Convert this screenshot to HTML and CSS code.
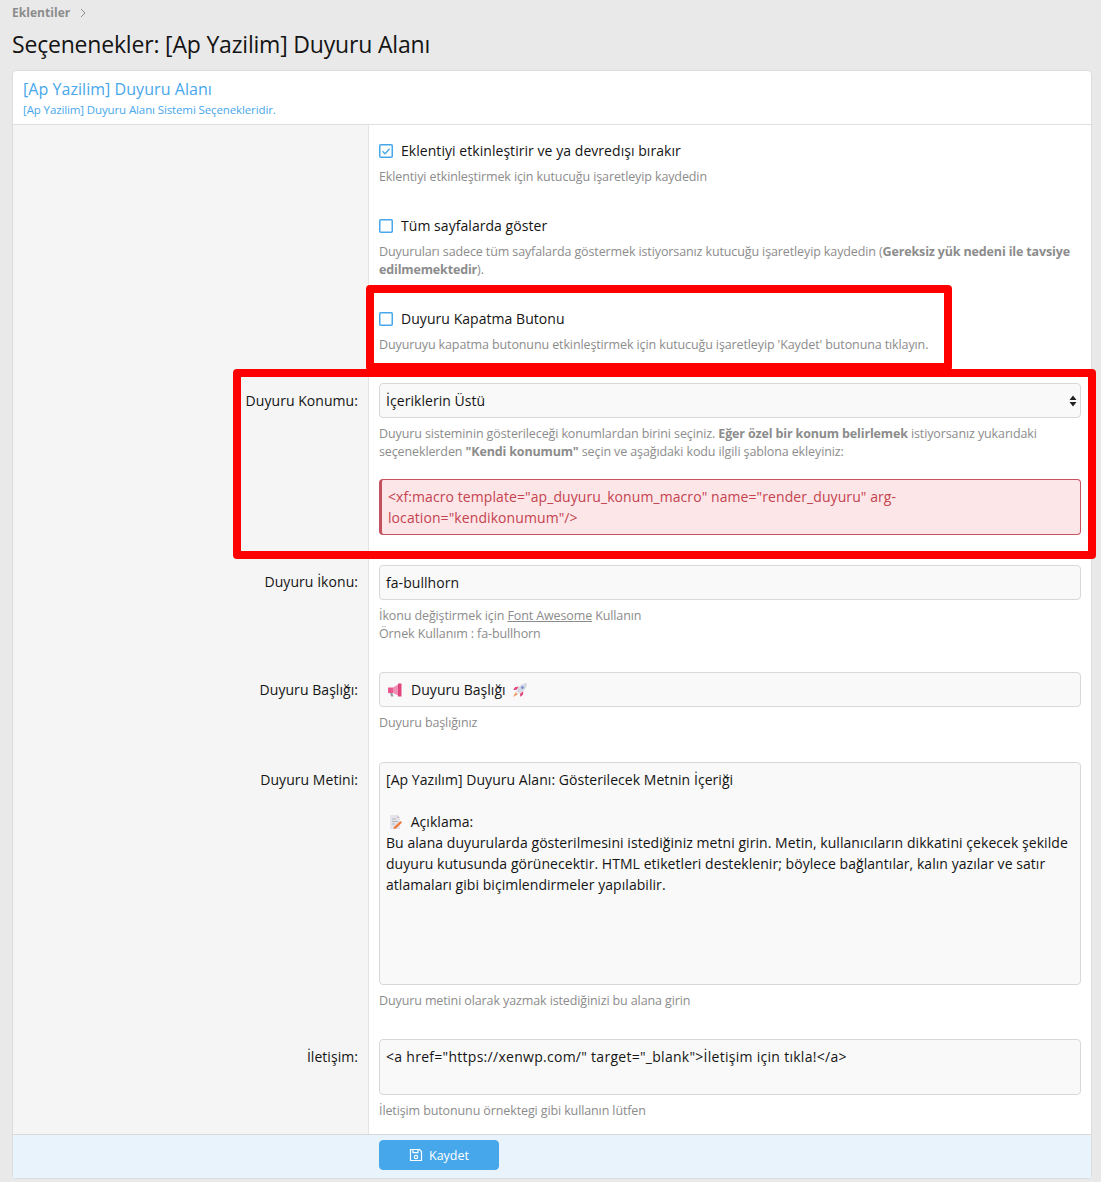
FILE: index.html
```html
<!DOCTYPE html>
<html lang="tr">
<head>
  <meta charset="UTF-8">
  <title>Seçenenekler: [Ap Yazilim] Duyuru Alanı</title>
  <meta name="viewport" content="width=device-width, initial-scale=1.0" />
  <link rel="stylesheet" href="styles.css">
</head>
<body>
  <div class="breadcrumb">
    <span>Eklentiler</span>
    <svg class="crumb-arrow" viewBox="0 0 6 10" width="6" height="10"><path d="M1 1l4 4-4 4" fill="none" stroke="#8c8c8c" stroke-width="1"/></svg>
  </div>
  <h1 class="page-title">Seçenenekler: [Ap Yazilim] Duyuru Alanı</h1>

  <form class="block">
    <div class="block-header">
      <h2>[Ap Yazilim] Duyuru Alanı</h2>
      <p>[Ap Yazilim] Duyuru Alanı Sistemi Seçenekleridir.</p>
    </div>

    <!-- Satirlar -->
    <div class="row row-check-1">
      <div class="label"></div>
      <div class="field">
        <label class="check">
          <svg class="box" viewBox="0 0 14 14" width="14" height="14"><rect x=".75" y=".75" width="12.5" height="12.5" rx="1" fill="none" stroke="#47a7eb" stroke-width="1.5"/><path d="M3.5 7.2l2.5 2.5 4.6-5" fill="none" stroke="#47a7eb" stroke-width="1.3"/></svg>
          Eklentiyi etkinleştirir ve ya devredışı bırakır
        </label>
        <p class="hint">Eklentiyi etkinleştirmek için kutucuğu işaretleyip kaydedin</p>
      </div>
    </div>

    <div class="row row-check-2">
      <div class="label"></div>
      <div class="field">
        <label class="check">
          <svg class="box" viewBox="0 0 14 14" width="14" height="14"><rect x=".75" y=".75" width="12.5" height="12.5" rx="1" fill="none" stroke="#47a7eb" stroke-width="1.5"/></svg>
          Tüm sayfalarda göster
        </label>
        <p class="hint">Duyuruları sadece tüm sayfalarda göstermek istiyorsanız kutucuğu işaretleyip kaydedin (<b>Gereksiz yük nedeni ile tavsiye<br>edilmemektedir</b>).</p>
      </div>
    </div>

    <div class="row row-check-3">
      <div class="label"></div>
      <div class="field">
        <label class="check">
          <svg class="box" viewBox="0 0 14 14" width="14" height="14"><rect x=".75" y=".75" width="12.5" height="12.5" rx="1" fill="none" stroke="#47a7eb" stroke-width="1.5"/></svg>
          Duyuru Kapatma Butonu
        </label>
        <p class="hint">Duyuruyu kapatma butonunu etkinleştirmek için kutucuğu işaretleyip 'Kaydet' butonuna tıklayın.</p>
      </div>
    </div>

    <div class="row row-position">
      <div class="label">Duyuru Konumu:</div>
      <div class="field">
        <div class="input select">
          <span>İçeriklerin Üstü</span>
          <svg viewBox="0 0 8 12" width="8" height="12"><path d="M4 .5L7.5 5H.5zM4 11.5L.5 7h7z" fill="#222"/></svg>
        </div>
        <p class="hint">Duyuru sisteminin gösterileceği konumlardan birini seçiniz. <b>Eğer özel bir konum belirlemek</b> istiyorsanız yukarıdaki<br>seçeneklerden <b>"Kendi konumum"</b> seçin ve aşağıdaki kodu ilgili şablona ekleyiniz:</p>
        <div class="code-box">&lt;xf:macro template="ap_duyuru_konum_macro" name="render_duyuru" arg-<br>location="kendikonumum"/&gt;</div>
      </div>
    </div>

    <div class="row row-icon">
      <div class="label">Duyuru İkonu:</div>
      <div class="field">
        <div class="input">fa-bullhorn</div>
        <p class="hint">İkonu değiştirmek için <a href="#">Font Awesome</a> Kullanın<br>Örnek Kullanım : fa-bullhorn</p>
      </div>
    </div>

    <div class="row row-title">
      <div class="label">Duyuru Başlığı:</div>
      <div class="field">
        <div class="input">
          <svg class="emoji megaphone" viewBox="0 0 16 16" width="16" height="16"><path d="M1 5.5h5V11H1z" fill="#e8588f"/><path d="M6 5.5l5-3v11L6 11z" fill="#f08fb4"/><path d="M11 1.5h3.5v13H11z" fill="#e0447c"/><path d="M3 11h2.4l1 3.5H4z" fill="#9a9aa5"/></svg>
          <span class="emoji-gap">Duyuru Başlığı</span>
          <svg class="emoji" viewBox="0 0 16 16" width="16" height="16"><path d="M15 1c-3.6.2-6.3 1.6-8.2 4.3L4.4 9.2l2.4 2.4 3.9-2.4C13.4 7.3 14.8 4.6 15 1z" fill="#d5d8e2"/><circle cx="10.4" cy="5.6" r="1.4" fill="#6d8fd0"/><path d="M6.8 4.6L3 5.2 1.2 8l3.4-.2zM11.4 9.2l-.6 3.8L8 14.8l.2-3.4z" fill="#e0447c"/><path d="M3.8 10.2L1 15l4.8-2.8z" fill="#f0945a"/></svg>
        </div>
        <p class="hint">Duyuru başlığınız</p>
      </div>
    </div>

    <div class="row row-text">
      <div class="label">Duyuru Metini:</div>
      <div class="field">
        <div class="input textarea">
          [Ap Yazılım] Duyuru Alanı: Gösterilecek Metnin İçeriği<br><br>
          <svg class="emoji memo" viewBox="0 0 16 16" width="16" height="16"><path d="M3 1h7l3 3v11H3z" fill="#e4e4ea"/><path d="M10 1l3 3h-3z" fill="#c3c3cc"/><path d="M5 5h4M5 7.5h6M5 10h3" stroke="#b3b3bd" stroke-width="1"/><path d="M7 13l6.5-6 1.5 1.500L9 14.500l-2.500.5z" fill="#ef7a3c"/></svg>
          <span class="emoji-gap memo-text">Açıklama:</span><br>
          Bu alana duyurularda gösterilmesini istediğiniz metni girin. Metin, kullanıcıların dikkatini çekecek şekilde<br>
          duyuru kutusunda görünecektir. HTML etiketleri desteklenir; böylece bağlantılar, kalın yazılar ve satır<br>
          atlamaları gibi biçimlendirmeler yapılabilir.
        </div>
        <p class="hint">Duyuru metini olarak yazmak istediğinizi bu alana girin</p>
      </div>
    </div>

    <div class="row row-contact">
      <div class="label">İletişim:</div>
      <div class="field">
        <div class="input contact">&lt;a href="https://xenwp.com/" target="_blank"&gt;İletişim için tıkla!&lt;/a&gt;</div>
        <p class="hint">İletişim butonunu örnektegi gibi kullanın lütfen</p>
      </div>
    </div>

    <div class="block-footer">
      <button type="button" class="btn-save">
        <svg viewBox="0 0 14 14" width="14" height="14"><path d="M1.5 1.5h9l2 2v9h-11z" fill="none" stroke="#fff" stroke-width="1.2"/><path d="M4 1.5v3.2h5V1.5" fill="none" stroke="#fff" stroke-width="1.2"/><circle cx="7" cy="9" r="1.7" fill="none" stroke="#fff" stroke-width="1.2"/></svg>
        Kaydet
      </button>
    </div>

    <!-- Kirmizi isaretler -->
    <div class="mark mark-close"></div>
    <div class="mark mark-position"></div>
  </form>
</body>
</html>
```

FILE: styles.css
```css
* {
  margin: 0;
  padding: 0;
  box-sizing: border-box;
}

body {
  background-color: #e9e9e9;
  color: #141414;
  font-family: "Open Sans", Arial, sans-serif;
  font-size: 14px;
  letter-spacing: 0.05px;
  padding: 0 9px 0 12px;
  height: 1182px;
  overflow: hidden;
}

/* Ust kisim */
.breadcrumb {
  display: flex;
  align-items: center;
  gap: 10px;
  height: 25px;
  font-size: 12px;
  font-weight: 700;
  color: #8c8c8c;
}

.page-title {
  font-size: 23px;
  font-weight: 400;
  line-height: 30px;
  height: 45px;
  padding-top: 4px;
  letter-spacing: -0.19px;
}

/* Blok */
.block {
  position: relative;
  background: #fff;
  border: 1px solid #dcdcdc;
  border-radius: 4px;
}

.block-header {
  height: 54px;
  padding: 7px 10px 0;
  border-bottom: 1px solid #dfdfdf;
}
.block-header h2 {
  font-size: 16px;
  font-weight: 400;
  line-height: 22px;
  color: #47a7eb;
}
.block-header p {
  font-size: 11.5px;
  line-height: 19px;
  letter-spacing: -0.12px;
  color: #47a7eb;
}

.row {
  display: flex;
}

.label {
  flex: 0 0 356px;
  background: #f5f5f5;
  border-right: 1px solid #e4e4e4;
  padding-right: 10px;
  text-align: right;
  line-height: 20px;
}

.field {
  flex: 1;
  padding: 0 10px 0 10px;
}

.hint {
  font-size: 12.5px;
  line-height: 18px;
  letter-spacing: -0.115px;
  color: #8c8c8c;
  margin-top: 7px;
}
.hint b {
  letter-spacing: -0.15px;
}
.hint a {
  color: #8c8c8c;
  text-decoration: underline;
}

.check {
  display: flex;
  align-items: center;
  gap: 8px;
  line-height: 20px;
}

.input {
  background: #f9f9f9;
  border: 1px solid #d8d8d8;
  border-radius: 4px;
  height: 35px;
  padding: 6px;
  line-height: 21px;
  display: flex;
  align-items: center;
}

.select {
  justify-content: space-between;
  padding-right: 3px;
}

.textarea {
  display: block;
  height: 223px;
}

.contact {
  display: block;
  height: 56px;
  letter-spacing: 0.28px;
}

.emoji {
  flex: none;
  vertical-align: -3px;
}
.megaphone {
  margin-left: 1px;
}
.memo {
  margin-left: 1px;
}
.emoji-gap {
  margin: 0 6px 0 8px;
}
.memo-text {
  margin-left: 4px;
}

.code-box {
  background: #fde6e8;
  border: 1px solid #c4535f;
  border-left-width: 3px;
  border-radius: 4px;
  color: #c4434f;
  height: 56px;
  margin-top: 18px;
  padding: 6px 6px;
  line-height: 21px;
  letter-spacing: 0.08px;
}

/* Satir bosluklari */
.row-check-1 .field { padding-top: 16px; padding-bottom: 30px; }
.row-check-2 .field { padding-top: 0; padding-bottom: 0; }
.row-check-3 .field { padding-top: 30px; padding-bottom: 15px; }
.row-position .field { padding-top: 14px; padding-bottom: 15px; }
.row-position .label { padding-top: 22px; }
.row-icon .field { padding-top: 15px; padding-bottom: 20px; }
.row-icon .label { padding-top: 22px; }
.row-title .field { padding-top: 9px; padding-bottom: 30px; }
.row-title .label { padding-top: 17px; }
.row-text .field { padding-top: 0; padding-bottom: 29px; }
.row-text .label { padding-top: 8px; }
.row-contact .field { padding-top: 0; padding-bottom: 14px; }
.row-contact .label { padding-top: 8px; }

/* Alt kisim */
.block-footer {
  height: 44px;
  background: #e9f3fb;
  border-top: 1px solid #d8d8d8;
  padding: 5px 0 0 366px;
}

.btn-save {
  display: flex;
  align-items: center;
  justify-content: center;
  gap: 6px;
  width: 120px;
  height: 30px;
  background: #47a7eb;
  border: 1px solid #47a7eb;
  border-radius: 4px;
  color: #fff;
  font-family: inherit;
  font-size: 12.5px;
}

/* Kirmizi cerceveler */
.mark {
  position: absolute;
  border: 8px solid #ff0000;
  border-radius: 4px;
}
.mark-close {
  left: 353px;
  top: 214px;
  width: 586px;
  height: 86px;
}
.mark-position {
  left: 220px;
  top: 298px;
  width: 863px;
  height: 190px;
}
```
